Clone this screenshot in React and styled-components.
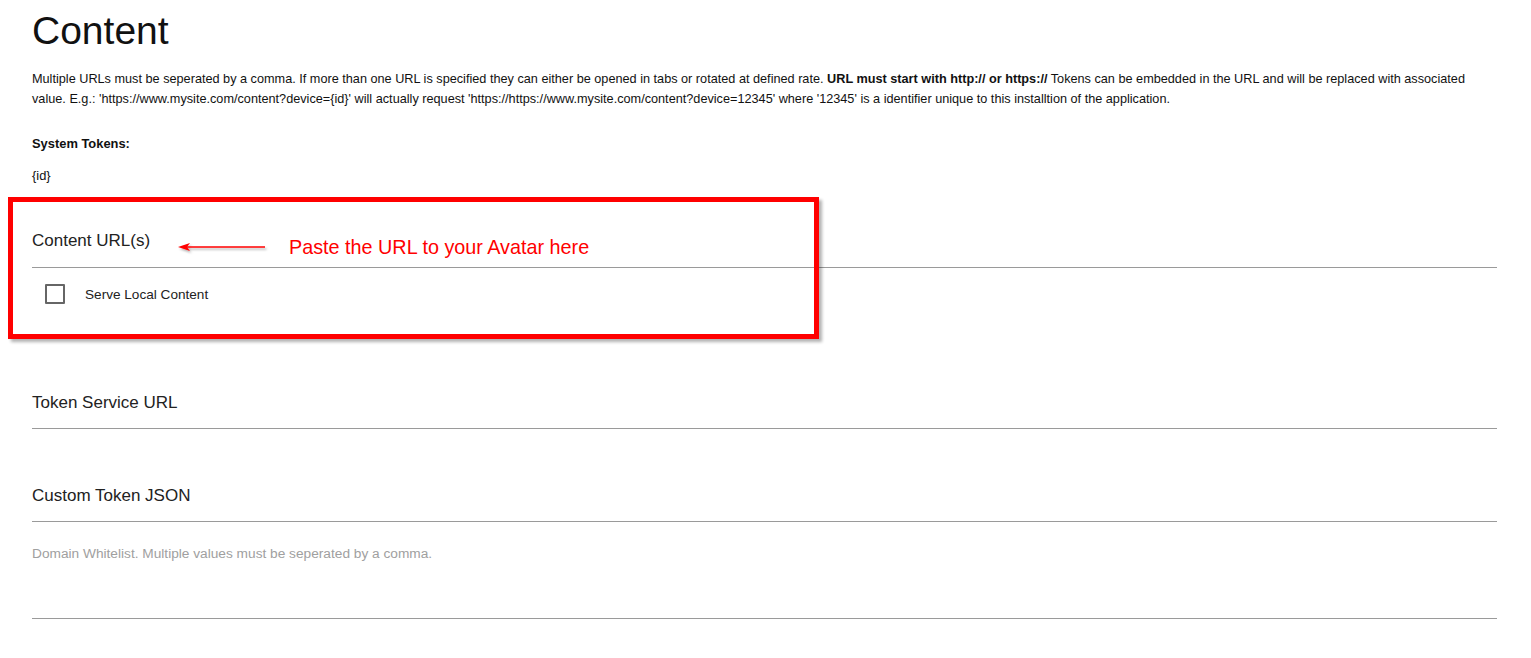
import React from "react";
import styled, { createGlobalStyle } from "styled-components";

const GlobalStyle = createGlobalStyle`
  html, body {
    margin: 0;
    padding: 0;
    background: #fff;
    font-family: "Liberation Sans", Arial, sans-serif;
    color: #111;
  }
`;

const Page = styled.div`
  position: relative;
  padding: 8px 34px 40px 32px;
`;

const Title = styled.h1`
  margin: 0;
  font-size: 39px;
  line-height: 46px;
  font-weight: 400;
  color: #111;
`;

const Help = styled.p`
  margin: 15px 0 0;
  font-size: 12.7px;
  line-height: 20px;
  color: #111;
`;

const TokensHeading = styled.p`
  margin: 25px 0 0;
  font-size: 12.9px;
  line-height: 20px;
  font-weight: 700;
`;

const Token = styled.p`
  margin: 12px 0 0;
  font-size: 12.9px;
  line-height: 20px;
`;

const Field = styled.div`
  margin-top: ${(p) => p.$gap}px;
  padding-bottom: ${(p) => p.$pad}px;
  border-bottom: 1px solid #9a9a9a;
`;

const FieldLabel = styled.label`
  display: block;
  font-size: 17px;
  line-height: 20px;
  min-height: 20px;
  color: #222;
`;

const CheckRow = styled.label`
  display: flex;
  align-items: center;
  gap: 20px;
  margin-top: 16px;
  padding-left: 13px;
  font-size: 13.6px;
  color: #222;
`;

const Box = styled.span`
  box-sizing: border-box;
  width: 20px;
  height: 20px;
  border: 2px solid #666;
  border-radius: 1px;
`;

const Hint = styled.p`
  margin: 22px 0 0;
  font-size: 13.7px;
  line-height: 20px;
  color: #a0a0a0;
`;

const Highlight = styled.div`
  position: absolute;
  left: 8px;
  top: 197px;
  width: 811px;
  height: 142px;
  box-sizing: border-box;
  border: 5px solid #ff0000;
  box-shadow: 3px 3px 3px rgba(0, 0, 0, 0.3);
  pointer-events: none;
`;

const Note = styled.div`
  position: absolute;
  left: 289px;
  top: 235px;
  font-size: 19.8px;
  line-height: 24px;
  color: #ff0000;
`;

const Arrow = styled.svg`
  position: absolute;
  left: 176px;
  top: 239px;
  overflow: visible;
`;

export default function App() {
  return (
    <>
      <GlobalStyle />
      <Page>
        <Title>Content</Title>
        <Help>
          Multiple URLs must be seperated by a comma. If more than one URL is
          specified they can either be opened in tabs or rotated at defined
          rate. <b>URL must start with http:// or https://</b> Tokens can be
          embedded in the URL and will be replaced with associated value. E.g.:
          'https://www.mysite.com/content?device={"{id}"}' will actually
          request 'https://https://www.mysite.com/content?device=12345' where
          '12345' is a identifier unique to this installtion of the application.
        </Help>
        <TokensHeading>System Tokens:</TokensHeading>
        <Token>{"{id}"}</Token>

        <Field $gap={45} $pad={16}>
          <FieldLabel>Content URL(s)</FieldLabel>
        </Field>
        <CheckRow>
          <Box />
          Serve Local Content
        </CheckRow>

        <Field $gap={89} $pad={15}>
          <FieldLabel>Token Service URL</FieldLabel>
        </Field>
        <Field $gap={57} $pad={15}>
          <FieldLabel>Custom Token JSON</FieldLabel>
        </Field>
        <Hint>Domain Whitelist. Multiple values must be seperated by a comma.</Hint>
        <Field $gap={34} $pad={0}>
          <FieldLabel />
        </Field>

        <Highlight />
        <Arrow width="92" height="16" viewBox="0 0 92 16">
          <defs>
            <filter id="sh" x="-10%" y="-50%" width="130%" height="250%">
              <feDropShadow dx="1.5" dy="2" stdDeviation="1" floodColor="#000" floodOpacity="0.3" />
            </filter>
          </defs>
          <g filter="url(#sh)">
            <line x1="10" y1="8" x2="89" y2="8" stroke="#ff0000" strokeWidth="1.6" />
            <path d="M2 8 L14 4 L11 8 L14 12 Z" fill="#ff0000" />
          </g>
        </Arrow>
        <Note>Paste the URL to your Avatar here</Note>
      </Page>
    </>
  );
}
